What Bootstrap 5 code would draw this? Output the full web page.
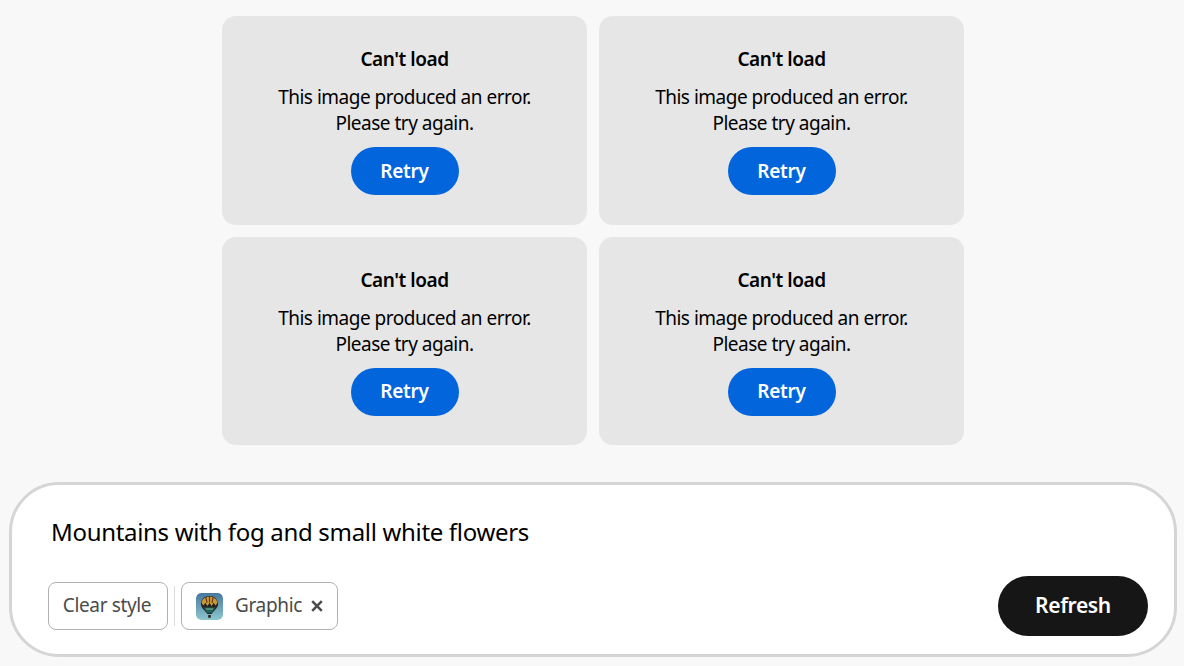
<!DOCTYPE html>
<html lang="en">
<head>
<meta charset="utf-8">
<title>Generate</title>
<link href="https://cdn.jsdelivr.net/npm/bootstrap@5.3.0/dist/css/bootstrap.min.css" rel="stylesheet">
<style>
html,body{height:666px;overflow:hidden}
body{background:#f8f8f8;font-family:"Noto Sans","Open Sans",sans-serif;color:#000}
.page-wrap{height:666px;padding:16px 7px 9px 9px}
.result-grid{width:742px;margin:0 auto;display:grid;grid-template-columns:365px 365px;gap:12px}
.err-tile{height:208.5px;background:#e6e6e6;border-radius:14px;padding-top:31px;text-align:center}
.err-title{font-size:19px;line-height:24px;font-weight:600;margin:0 0 13px;letter-spacing:-.45px}
.err-text{font-size:19px;line-height:26px;margin:0;letter-spacing:-.5px}
.retry-btn{width:108px;height:48px;margin-top:11px;border-radius:24px;background:#0265dc;border:0;color:#fff;font-size:19px;font-weight:600;padding:0;letter-spacing:-.25px}
.prompt-box{height:175px;margin-top:37px;background:#fff;border:3px solid #d5d5d5;border-radius:50px;padding:0 26px 0 36px;}
.prompt-text{font-size:24px;line-height:32px;padding:31px 0 0 3px;margin:0;height:75px;letter-spacing:-.32px}
.ctl-row{height:60px;margin-top:16px}
.chip{height:48px;background:#fff;border:1px solid #b1b1b1;border-radius:8px;color:#4b4b4b;font-size:19px;line-height:1;letter-spacing:-.35px;padding:0 0 2px}
.chip-clear{width:120px;padding-right:2px}
.chip-style{width:157px;padding-left:14px;padding-right:14px}
.chip-sep{width:1px;height:40px;background:#dcdcdc;margin:0 6px}
.style-thumb{width:27px;height:27px;border-radius:5px;display:block;flex:none;margin-top:2px}
.close-mark{margin-top:2px}
.refresh-btn{width:150px;height:60px;border-radius:30px;background:#161616;border:0;color:#fff;font-size:21px;font-weight:600;padding:0;letter-spacing:-.35px}
</style>
</head>
<body>
<div class="page-wrap">
  <div class="result-grid">
    <div class="err-tile"><p class="err-title">Can't load</p><p class="err-text">This image produced an error.<br>Please try again.</p><button class="btn retry-btn" type="button">Retry</button></div>
    <div class="err-tile"><p class="err-title">Can't load</p><p class="err-text">This image produced an error.<br>Please try again.</p><button class="btn retry-btn" type="button">Retry</button></div>
    <div class="err-tile"><p class="err-title">Can't load</p><p class="err-text">This image produced an error.<br>Please try again.</p><button class="btn retry-btn" type="button">Retry</button></div>
    <div class="err-tile"><p class="err-title">Can't load</p><p class="err-text">This image produced an error.<br>Please try again.</p><button class="btn retry-btn" type="button">Retry</button></div>
  </div>
  <div class="prompt-box">
    <p class="prompt-text">Mountains with fog and small white flowers</p>
    <div class="ctl-row d-flex align-items-center">
      <button class="chip chip-clear" type="button">Clear style</button>
      <span class="chip-sep"></span>
      <div class="chip chip-style d-flex align-items-center">
        <svg class="style-thumb" viewBox="0 0 27 27" aria-hidden="true">
          <defs><linearGradient id="sky" x1="0" y1="0" x2="0" y2="1"><stop offset="0" stop-color="#47779f"/><stop offset="1" stop-color="#8cc7cf"/></linearGradient></defs>
          <rect width="27" height="27" rx="5" fill="url(#sky)"/>
          <path d="M13.500 3C8.500 3 5 6.500 5 11c0 3.800 3.800 6.500 6.500 10h4c2.700-3.500 6.500-6.200 6.500-10 0-4.500-3.500-8-8.500-8z" fill="#2a241e"/>
          <path d="M5.500 9.500C6.500 6 9.500 3.800 13.500 3.800S20.500 6 21.500 9.500l-1.800 3-2.100-2.800-2 3.200-2.100-3.200-2.100 3.200-2-3.200-2.100 2.800z" fill="#c99a35"/>
          <path d="M10 4.800l1 5M13.500 3.800v5.800M17 4.800l-1 5" stroke="#6a3a20" stroke-width="1.200" fill="none"/>
          <path d="M7.500 14.500h12l-3.800 5.500h-4.400z" fill="#1e625e"/>
          <path d="M10 16h7" stroke="#7fb58e" stroke-width="1.100"/>
          <rect x="12.200" y="22" width="2.600" height="2.800" fill="#2a2320"/>
        </svg>
        <span class="ms-2 ps-1">Graphic</span>
        <svg class="close-mark ms-auto" width="12" height="12" viewBox="0 0 12 12" aria-hidden="true"><path d="M1.200 1.200l9.600 9.600M10.800 1.200l-9.600 9.600" stroke="#4b4b4b" stroke-width="2.500"/></svg>
      </div>
      <button class="refresh-btn ms-auto" type="button">Refresh</button>
    </div>
  </div>
</div>
<script src="https://cdn.jsdelivr.net/npm/bootstrap@5.3.0/dist/js/bootstrap.bundle.min.js"></script>
</body>
</html>
